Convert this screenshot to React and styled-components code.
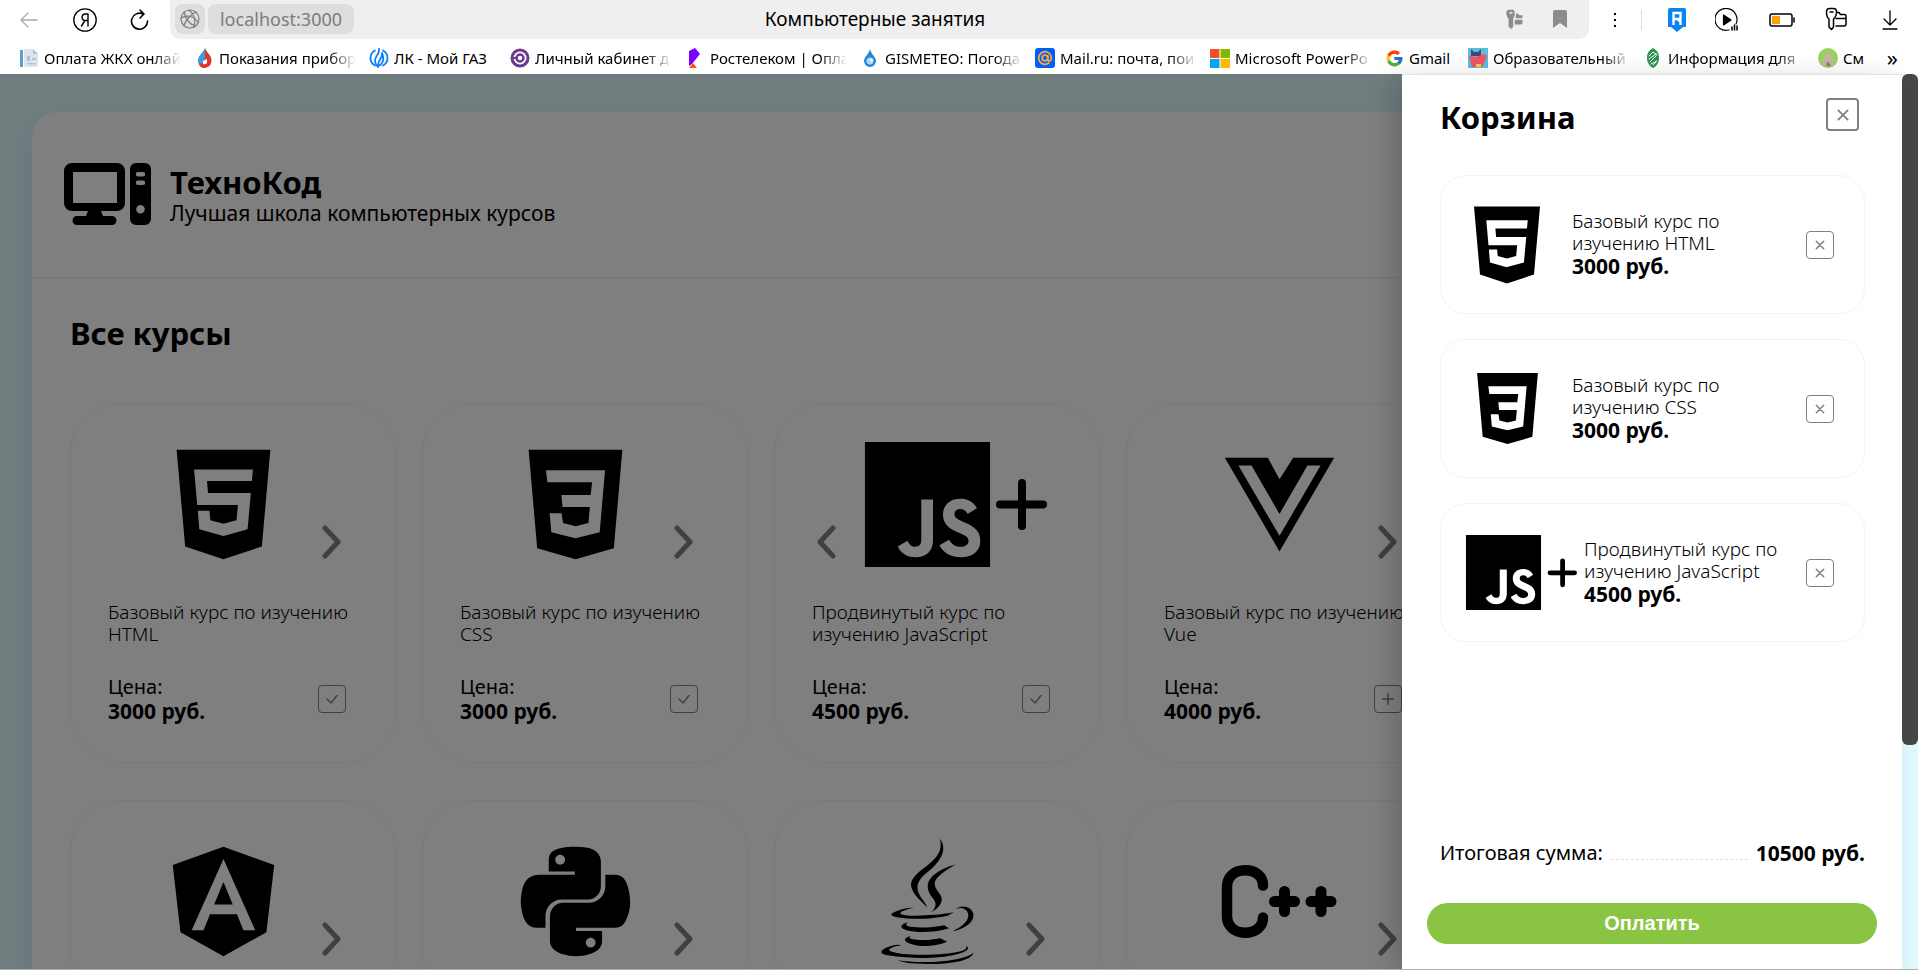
import React from "react";
import styled, { createGlobalStyle } from "styled-components";
import { FaHtml5, FaJs, FaVuejs, FaAngular, FaPython, FaJava } from "react-icons/fa";
import { FcGoogle } from "react-icons/fc";

const GlobalStyle = createGlobalStyle`
  * { box-sizing: border-box; }
  body {
    margin: 0;
    background: #dffaff;
    color: #000;
    font-family: "Noto Sans", "Open Sans", sans-serif;
  }
  h1, h2, p, ul { margin: 0; padding: 0; }
  ul { list-style: none; }
  button { font-family: inherit; cursor: pointer; }
`;

const Window = styled.div`
  display: flex;
  flex-direction: column;
  height: 100vh;
  overflow: hidden;
  border-bottom: 1px solid #b5aca8;
`;

/* ---------- browser bars ---------- */

const BrowserBars = styled.header`
  flex: none;
  background: #fff;
`;

const Toolbar = styled.div`
  display: flex;
  align-items: center;
  height: 39px;
  padding: 0 2px 0 12px;
`;

const BarButton = styled.button`
  display: flex;
  align-items: center;
  justify-content: center;
  flex: none;
  width: ${(p) => p.$width || 55}px;
  height: 36px;
  padding: 0;
  border: 0;
  background: none;
`;

const NavGroup = styled.nav`
  display: flex;
  flex: none;
  width: 158px;
`;

const AddressBar = styled.div`
  display: flex;
  align-items: center;
  flex: 1;
  height: 39px;
  padding: 0 12px 1px 5px;
  gap: 3px;
  border-radius: 0 0 10px 10px;
  background: #efefef;
`;

const Chip = styled.button`
  display: flex;
  align-items: center;
  justify-content: center;
  flex: none;
  width: ${(p) => p.$width}px;
  height: 30px;
  padding: 0;
  border: 0;
  border-radius: 8px;
  background: #dedede;
  color: #7c7c7c;
  font-size: 18px;
`;

const PageTitle = styled.span`
  flex: 1;
  padding-right: 92px;
  text-align: center;
  font-size: 19px;
  line-height: 30px;
`;

const Separator = styled.span`
  width: 1px;
  height: 20px;
  margin: 0 14px 0 0;
  background: #dcdcdc;
`;

const Bookmarks = styled.ul`
  display: flex;
  align-items: center;
  gap: 16px;
  height: 35px;
  padding: 3px 20px 0 19px;
`;

const BookmarkLink = styled.a`
  display: flex;
  align-items: center;
  gap: 5px;
  color: #000;
  font-size: 15px;
  line-height: 20px;
  text-decoration: none;

  svg { flex: none; }
`;

const BookmarkText = styled.span`
  width: ${(p) => p.$width}px;
  margin-right: ${(p) => (p.$fade ? -12 : 0)}px;
  overflow: hidden;
  white-space: nowrap;
  mask-image: ${(p) =>
    p.$fade ? "linear-gradient(to right, #000 75%, transparent 94%)" : "none"};
`;

const MoreButton = styled.button`
  margin-left: auto;
  padding: 0 0 2px;
  border: 0;
  background: none;
  font-size: 22px;
  line-height: 20px;
`;

/* ---------- shop page ---------- */

const Viewport = styled.div`
  position: relative;
  display: flex;
  flex: 1;
  min-height: 0;
`;

const Page = styled.div`
  flex: 1;
  min-width: 0;
  overflow: hidden;
  padding: 38px 32px 0;
`;

const Shop = styled.div`
  min-height: 1200px;
  border-radius: 25px;
  background: #fff;
  box-shadow: 0 10px 20px rgba(0, 0, 0, 0.06);
`;

const ShopHeader = styled.div`
  display: flex;
  align-items: center;
  gap: 19px;
  height: 166px;
  padding: 0 32px 1px;
  border-bottom: 1px solid #eaeaea;
`;

const ShopTitles = styled.div`
  padding-top: 2px;
`;

const ShopName = styled.h1`
  font-size: 31px;
  line-height: 36px;
  font-weight: 700;
`;

const Slogan = styled.p`
  font-size: 21px;
  line-height: 27px;
`;

const Courses = styled.main`
  padding: 36px 38px;
`;

const SectionTitle = styled.h2`
  font-size: 31px;
  line-height: 38px;
  font-weight: 700;
`;

const CourseGrid = styled.div`
  display: grid;
  grid-template-columns: repeat(4, 326px);
  gap: 37px 26px;
  margin-top: 51px;
`;

const Card = styled.article`
  padding: 38px 37px;
  border: 1px solid #f3f3f3;
  border-radius: 50px;
`;

const Media = styled.div`
  display: grid;
  grid-template-columns: 24px 1fr 26px;
  align-items: end;
  width: 233px;
  height: 125px;
`;

const Picture = styled.div`
  grid-column: 2;
  display: flex;
  align-items: center;
  justify-content: center;
  height: 125px;
  margin: 0 -10px;

  svg { flex: none; }
`;

const SlideButton = styled.button`
  grid-column: ${(p) => (p.$next ? 3 : 1)};
  grid-row: 1;
  display: flex;
  justify-content: ${(p) => (p.$next ? "flex-end" : "flex-start")};
  padding: 0 0 8px;
  padding-left: ${(p) => (p.$next ? 0 : 5)}px;
  border: 0;
  background: none;
  color: #808080;

  svg { flex: none; }
`;

const CourseName = styled.p`
  font-size: 19px;
  line-height: 22px;
  font-weight: 300;
`;

const CardName = styled(CourseName)`
  height: 44px;
  margin-top: 34px;
`;

const PriceRow = styled.div`
  display: flex;
  align-items: center;
  justify-content: space-between;
  margin-top: 29px;
  padding-right: 12px;
  font-size: 20px;
  line-height: 25px;
`;

const Price = styled.p`
  font-size: 21px;
  line-height: 25px;
  font-weight: 700;
`;

const SquareButton = styled.button`
  display: flex;
  align-items: center;
  justify-content: center;
  flex: none;
  width: ${(p) => p.$size || 28}px;
  height: ${(p) => p.$size || 28}px;
  padding: 0;
  border: ${(p) => (p.$size ? 2 : 1)}px solid #808080;
  border-radius: 4px;
  background: none;
  color: #808080;
`;

/* ---------- cart ---------- */

const Scrollbar = styled.div`
  flex: none;
  width: 16px;
  background: #dffaff;
`;

const Thumb = styled.div`
  height: 75%;
  border-radius: 6px;
  background: #474747;
`;

const Overlay = styled.div`
  position: absolute;
  inset: 0 16px 0 0;
  display: flex;
  justify-content: flex-end;
  background: rgba(0, 0, 0, 0.5);
`;

const Drawer = styled.aside`
  display: flex;
  flex-direction: column;
  width: 500px;
  padding: 23px 25px 25px;
  border-top: 1px solid #e2e2e2;
  background: #fff;
  box-shadow: -10px 4px 24px rgba(0, 0, 0, 0.16);
`;

const DrawerHead = styled.div`
  display: flex;
  align-items: flex-start;
  justify-content: space-between;
  height: 77px;
  padding: 0 18px 0 13px;
`;

const CartList = styled.ul`
  display: flex;
  flex-direction: column;
  flex: 1;
  gap: 25px;
  padding: 0 12px 0 13px;
`;

const CartItem = styled.li`
  display: flex;
  align-items: center;
  height: 139px;
  padding: 0 30px 0 25px;
  border: 1px solid #f3f3f3;
  border-radius: 26px;
`;

const CartPicture = styled.div`
  display: flex;
  justify-content: ${(p) => (p.$wide ? "flex-start" : "center")};
  flex: none;
  width: ${(p) => (p.$wide ? 118 : 82)}px;
  margin-right: ${(p) => (p.$wide ? 0 : 24)}px;
`;

const CartText = styled.div`
  flex: 1;
  padding-right: 20px;
`;

const TotalRow = styled.div`
  display: flex;
  align-items: center;
  gap: 8px;
  padding: 0 12px 0 13px;
  font-size: 20px;
  line-height: 28px;
`;

const Dots = styled.span`
  flex: 1;
  height: 14px;
  border-bottom: 1px dashed #dfdfdf;
`;

const PayButton = styled.button`
  height: 41px;
  margin-top: 36px;
  padding: 0;
  border: 0;
  border-radius: 21px;
  background: #89c443;
  color: #fff;
  font-family: "Liberation Sans", sans-serif;
  font-size: 20px;
  font-weight: 700;
`;

/* ---------- drawings ---------- */

const Glyph = ({ w = 20, h = 20, box, children, ...rest }) => (
  <svg
    width={w}
    height={h}
    viewBox={box || `0 0 ${w} ${h}`}
    fill="none"
    stroke="currentColor"
    strokeLinecap="round"
    strokeLinejoin="round"
    aria-hidden="true"
    {...rest}
  >
    {children}
  </svg>
);

const Css3 = ({ size }) => (
  <svg width={size} height={size} viewBox="0 0 384 512" aria-hidden="true">
    <path
      fillRule="evenodd"
      d="M0 32h384l-35 403-157 45-157-45zM71 116l6 49h183l-6 52H134l5 49h112l-6 66-53 13-51-13-6-40H86l7 78 99 24 99-24 22-254z"
    />
  </svg>
);

const JsPlus = ({ size }) => (
  <svg width={size} height={size} viewBox="0 0 125 125" overflow="visible" aria-hidden="true">
    <FaJs x="-9" y="-9" size={143} />
    <path
      d={size > 100 ? "M157 41v43M135 62.500h43" : "M161 43v40M140 63h41"}
      fill="none"
      stroke="#000"
      strokeWidth={8}
      strokeLinecap="round"
    />
  </svg>
);

const Cpp = () => (
  <svg width="125" height="125" viewBox="0 0 125 125" fill="none" stroke="#000" strokeLinecap="round" aria-hidden="true">
    <path d="M46 46.500c0-9-7-15.200-18-15.200s-18 7-18 16.700v29c0 9.700 7 16.700 18 16.700s18-6.200 18-15.200" strokeWidth="10.500" />
    <path d="M67.500 52.500v20M57.500 62.500h20M104 52.500v20M94 62.500h20" strokeWidth="11" />
  </svg>
);

const Computer = () => (
  <svg width="87" height="62" viewBox="0 0 87 62" aria-hidden="true">
    <path
      fillRule="evenodd"
      d="M8 0h45a8 8 0 0 1 8 8v32a8 8 0 0 1-8 8H37l2 5h9a4.500 4.500 0 0 1 0 9H13a4.500 4.500 0 0 1 0-9h9l2-5H8a8 8 0 0 1-8-8V8a8 8 0 0 1 8-8zM9 9v31h44V9z"
    />
    <path
      fillRule="evenodd"
      d="M72 0h9a6 6 0 0 1 6 6v50a6 6 0 0 1-6 6h-9a6 6 0 0 1-6-6V6a6 6 0 0 1 6-6zM74 9a2.200 2.200 0 0 0 0 4.400h5a2.200 2.200 0 0 0 0-4.400zM74 17.500a2.200 2.200 0 0 0 0 4.400h5a2.200 2.200 0 0 0 0-4.400zM76.500 42a4.300 4.300 0 1 0 .01 8.600a4.300 4.300 0 0 0-.01-8.600z"
    />
  </svg>
);

const Chevron = ({ next }) => (
  <Glyph w={19} h={34} strokeWidth="5">
    <path d={next ? "M3 3l13 14-13 14" : "M16 3L3 17l13 14"} />
  </Glyph>
);

const Check = () => (
  <Glyph w={12} h={12} strokeWidth="1.500"><path d="M1 6l4 4 6-7.500" /></Glyph>
);
const Plus = () => (
  <Glyph w={12} h={12} strokeWidth="1.500"><path d="M6 .75v10.500M.75 6h10.500" /></Glyph>
);
const Cross = ({ size = 8 }) => (
  <Glyph w={size} h={size} box="0 0 8 8" overflow="visible" strokeWidth="1.500">
    <path d="M.3.3l7.400 7.400M7.700.3L.3 7.700" />
  </Glyph>
);

const KeyShape = () => (
  <Glyph w={22} h={26} strokeWidth={1.5}>
    <path d="M1.500 5c0-2 1-3.500 3-3.500h4c2 0 3 1.500 3 3.500 0 3-.5 5-3 7v8l-2 2.500L4 20V12C2 10.500 1.500 8 1.500 5z" />
    <path d="M12 5.500h2l1.500 2h4q1.500 0 1.500 1.500V17q0 2-2 2h-8M11 11.500h10M5 5h3" />
  </Glyph>
);

/* ---------- data ---------- */

const favicons = {
  doc: (
    <Glyph stroke="none">
      <path d="M1 2h3v17H1z" fill="#5d9fd0" /><path d="M5 1h9l5 5v13H5z" fill="#dde5ec" />
      <path d="M14 1v5h5zM8 8h3v5H8zM13 10h4v2h-4zM8 15h9v1.500H8z" fill="#b5c3d0" />
    </Glyph>
  ),
  drop: (
    <Glyph stroke="none">
      <path d="M11 0c-2 5-8 8-7 14 1 4 4 6 7 6z" fill="#39a0dd" />
      <path d="M11 0c2 5 7 8 6.500 13S14 20 9 20c-3-1-4-3-4-5 4 2 6-2 6-6z" fill="#e23427" />
      <path d="M9 13l4-2v4q-2 2-4 1z" fill="#fff" />
    </Glyph>
  ),
  gas: (
    <Glyph stroke="#0b7cff" strokeWidth="1.800">
      <path d="M6 2.500a8.500 8.500 0 0 0 0 15M14 2.500a8.500 8.500 0 0 1 0 15" />
      <path d="M10 1C11 6 6 8 6 13c0 3 2 5 3 6M13 5c1 5-4 6-4 13 4-1 7-6 4-13z" />
    </Glyph>
  ),
  ring: (
    <Glyph stroke="#6b3c8c" strokeWidth="3">
      <circle cx="10" cy="10" r="8" /><circle cx="10" cy="10" r="3.500" strokeWidth="2.500" /><path d="M2 10h4" strokeWidth="2" />
    </Glyph>
  ),
  rostelecom: (
    <Glyph stroke="none">
      <path d="M4 3l6-3 5 6-8 10-3 2z" fill="#7700ff" /><path d="M4 20l4-5 4 5z" fill="#ff4f12" />
    </Glyph>
  ),
  gismeteo: (
    <Glyph stroke="none">
      <path d="M10 1c1 5 6 8 6 12a6 6 0 0 1-12 0C4 9 9 6 10 1z" fill="#2a83d8" />
      <circle cx="10" cy="13" r="3.500" fill="#9fdcff" /><circle cx="11.500" cy="12" r="1.500" fill="#fff" />
    </Glyph>
  ),
  mail: (
    <Glyph stroke="#ffa930" strokeWidth="1.800">
      <rect width="20" height="20" rx="3" fill="#005ff9" stroke="none" />
      <circle cx="10" cy="10" r="2.800" /><path d="M12.800 8v3.500c0 2.500 3.500 2 3.500-1.500a6.300 6.300 0 1 0-2.500 5" />
    </Glyph>
  ),
  microsoft: (
    <Glyph stroke="none">
      <path d="M0 1h9.500v9H0z" fill="#f25022" /><path d="M10.500 1H20v9h-9.500z" fill="#7fba00" />
      <path d="M0 11h9.500v9H0z" fill="#00a4ef" /><path d="M10.500 11H20v9h-9.500z" fill="#ffb900" />
    </Glyph>
  ),
  google: <FcGoogle size={19} />,
  school: (
    <Glyph stroke="none">
      <path d="M0 0h20v20H0z" fill="#5cbbe0" /><path d="M3 1l3 3h4l3-3v7H3z" fill="#45476e" />
      <path d="M1 8l7 1 8-3 3 2-5 11H4z" fill="#ef5361" /><path d="M8 16h5v3H8z" fill="#f7c93c" />
    </Glyph>
  ),
  leaf: (
    <Glyph stroke="none">
      <path d="M10 0c5 3 6 6 6 10s-2 8-6 10c-4-2-6-6-6-10S5 3 10 0z" fill="#2c9250" />
      <path d="M6 8l4-4 4 3M6 11l7-5M7 14l6-6M10 17l4-4-6 3" stroke="#fff" strokeWidth="1" />
    </Glyph>
  ),
  hands: (
    <Glyph stroke="none">
      <circle cx="10" cy="10" r="10" fill="#9bd05a" /><path d="M10 3l3 4 2 7 3 3H2l3-4 2-6z" fill="#c4b5a6" />
      <path d="M10 4v9l3 5H8l2-5" fill="#8c7a72" />
    </Glyph>
  ),
};

const bookmarks = [
  { icon: "doc", text: "Оплата ЖКХ онлай", width: 146, fade: true },
  { icon: "drop", text: "Показания прибор", width: 146, fade: true },
  { icon: "gas", text: "ЛК - Мой ГАЗ", width: 100 },
  { icon: "ring", text: "Личный кабинет д", width: 146, fade: true },
  { icon: "rostelecom", text: "Ростелеком | Опла", width: 146, fade: true },
  { icon: "gismeteo", text: "GISMETEO: Погода", width: 146, fade: true },
  { icon: "mail", text: "Mail.ru: почта, пои", width: 146, fade: true },
  { icon: "microsoft", text: "Microsoft PowerPo", width: 146, fade: true },
  { icon: "google", text: "Gmail", width: 43 },
  { icon: "school", text: "Образовательный", width: 146, fade: true },
  { icon: "leaf", text: "Информация для", width: 146, fade: true },
  { icon: "hands", text: "См", width: 24 },
];

const courses = [
  { name: "Базовый курс по изучению HTML", price: 3000, icon: <FaHtml5 size={125} />, added: true },
  { name: "Базовый курс по изучению CSS", price: 3000, icon: <Css3 size={125} />, added: true },
  { name: "Продвинутый курс по изучению JavaScript", price: 4500, icon: <JsPlus size={125} />, added: true, last: true },
  { name: "Базовый курс по изучению Vue", price: 4000, icon: <FaVuejs size={125} /> },
  { icon: <FaAngular size={125} /> },
  { icon: <FaPython size={125} /> },
  { icon: <FaJava size={125} /> },
  { icon: <Cpp /> },
];

const cart = [
  { name: "Базовый курс по изучению HTML", price: 3000, icon: <FaHtml5 size={88} /> },
  { name: "Базовый курс по изучению CSS", price: 3000, icon: <Css3 size={81} /> },
  { name: "Продвинутый курс по изучению JavaScript", price: 4500, icon: <JsPlus size={75} />, wide: true },
];

function Browser() {
  return (
    <BrowserBars>
      <Toolbar>
        <NavGroup>
          <BarButton $width={34} aria-label="Назад">
            <Glyph w={18} h={18} stroke="#a8a8a8" strokeWidth="1.300"><path d="M17 9H1M8 2L1 9l7 7" /></Glyph>
          </BarButton>
          <BarButton $width={78} aria-label="Яндекс">
            <Glyph w={24} h={24} strokeWidth="1.300">
              <circle cx="12" cy="12" r="11.200" />
              <path d="M15 18V6h-2.500c-4.500 0-4.500 6.500 0 6.500H15M12 12.500L8.500 18" strokeWidth="1.400" />
            </Glyph>
          </BarButton>
          <BarButton $width={32} aria-label="Обновить">
            <Glyph w={20} h={22} strokeWidth="1.600"><path d="M17.500 12A8 8 0 1 1 13 5M10 1l4 4-4 4" /></Glyph>
          </BarButton>
        </NavGroup>
        <AddressBar>
          <Chip $width={30} aria-label="Сведения о сайте">
            <Glyph strokeWidth="1.200">
              <circle cx="10" cy="10" r="9" /><path d="M4 3c2 8 6 13 12 14M16 3C12 5 5 11 4 17M1 9c5-3 12-3 17 4M9 1c5 4 7 10 5 17" />
            </Glyph>
          </Chip>
          <Chip $width={146}>localhost:3000</Chip>
          <PageTitle>Компьютерные занятия</PageTitle>
          <BarButton $width={52} aria-label="Пароли">
            <svg width="18" height="20" viewBox="0 0 22 26" fill="#8c8c8c" aria-hidden="true">
              <path d="M1 5c0-2 1-4 3-4h5c2 0 3 2 3 4 0 3 0 5-2 7v11l-3 3-3-3V13C2 11 1 8 1 5zM14 6h2l2 2h4v4h-9zM12 14h10v4q0 2-2 2h-8z" />
              <path d="M5 4h4v2H5z" fill="#efefef" />
            </svg>
          </BarButton>
          <BarButton $width={34} aria-label="В закладки">
            <svg width="14" height="18" viewBox="0 0 14 18" fill="#8c8c8c" aria-hidden="true"><path d="M2 0h10q2 0 2 2v16l-7-5-7 5V2q0-2 2-2z" /></svg>
          </BarButton>
        </AddressBar>
        <BarButton $width={52} aria-label="Меню">
          <svg width="4" height="16" viewBox="0 0 4 16" aria-hidden="true"><path d="M1 1h2v2H1zM1 7h2v2H1zM1 13h2v2H1z" /></svg>
        </BarButton>
        <Separator />
        <BarButton $width={42} aria-label="Расширение">
          <svg width="18" height="24" viewBox="0 0 18 24" aria-hidden="true">
            <path d="M2 0h14q2 0 2 2v17h-3l-6 5-6-5H0V2q0-2 2-2z" fill="#0a84f5" />
            <path d="M5.500 17V5h7v6h-7M9 11l3.500 2.500V17" fill="none" stroke="#fff" strokeWidth="2.400" />
          </svg>
        </BarButton>
        <BarButton $width={58} aria-label="Плеер">
          <Glyph w={24} h={24} strokeWidth="1.200">
            <path d="M14 22A11 11 0 1 1 21 16" /><path d="M8.500 7v10l7.500-5z" fill="#000" />
            <path d="M17 22v-3M19.500 22v-5M22 22v-4" strokeWidth="1.500" />
          </Glyph>
        </BarButton>
        <BarButton $width={52} aria-label="Батарея">
          <Glyph w={26} h={14} strokeWidth="1.500">
            <rect x="1" y="1" width="22" height="12" rx="2" /><path d="M3 3h8v8H3z" fill="#ffa000" stroke="none" /><path d="M25 5v4" />
          </Glyph>
        </BarButton>
        <BarButton $width={56} aria-label="Ключи"><KeyShape /></BarButton>
        <BarButton $width={52} aria-label="Загрузки">
          <Glyph w={16} h={20} strokeWidth="1.300"><path d="M8 1v14M2 9l6 6 6-6M1 19h14" /></Glyph>
        </BarButton>
      </Toolbar>
      <Bookmarks>
        {bookmarks.map((b) => (
          <li key={b.icon}>
            <BookmarkLink href="#">
              {favicons[b.icon]}
              <BookmarkText $width={b.width} $fade={b.fade}>{b.text}</BookmarkText>
            </BookmarkLink>
          </li>
        ))}
        <MoreButton aria-label="Ещё закладки">»</MoreButton>
      </Bookmarks>
    </BrowserBars>
  );
}

function CourseCard({ course }) {
  return (
    <Card>
      <Media>
        {course.last && <SlideButton aria-label="Предыдущий"><Chevron /></SlideButton>}
        <Picture>{course.icon}</Picture>
        {!course.last && <SlideButton $next aria-label="Следующий"><Chevron next /></SlideButton>}
      </Media>
      {course.name && (
        <>
          <CardName>{course.name}</CardName>
          <PriceRow>
            <div>
              Цена:
              <Price>{course.price} руб.</Price>
            </div>
            <SquareButton aria-label="В корзину">{course.added ? <Check /> : <Plus />}</SquareButton>
          </PriceRow>
        </>
      )}
    </Card>
  );
}

function Cart() {
  const total = cart.reduce((sum, item) => sum + item.price, 0);
  return (
    <Drawer>
      <DrawerHead>
        <SectionTitle>Корзина</SectionTitle>
        <SquareButton $size={33} aria-label="Закрыть"><Cross size={10} /></SquareButton>
      </DrawerHead>
      <CartList>
        {cart.map((item) => (
          <CartItem key={item.name}>
            <CartPicture $wide={item.wide}>{item.icon}</CartPicture>
            <CartText>
              <CourseName>{item.name}</CourseName>
              <Price>{item.price} руб.</Price>
            </CartText>
            <SquareButton aria-label="Удалить"><Cross /></SquareButton>
          </CartItem>
        ))}
      </CartList>
      <TotalRow>
        <span>Итоговая сумма:</span>
        <Dots />
        <Price>{total} руб.</Price>
      </TotalRow>
      <PayButton>Оплатить</PayButton>
    </Drawer>
  );
}

export default function App() {
  return (
    <>
      <GlobalStyle />
      <Window>
        <Browser />
        <Viewport>
          <Page>
            <Shop>
              <ShopHeader>
                <Computer />
                <ShopTitles>
                  <ShopName>ТехноКод</ShopName>
                  <Slogan>Лучшая школа компьютерных курсов</Slogan>
                </ShopTitles>
              </ShopHeader>
              <Courses>
                <SectionTitle>Все курсы</SectionTitle>
                <CourseGrid>
                  {courses.map((course, i) => <CourseCard key={i} course={course} />)}
                </CourseGrid>
              </Courses>
            </Shop>
          </Page>
          <Scrollbar><Thumb /></Scrollbar>
          <Overlay><Cart /></Overlay>
        </Viewport>
      </Window>
    </>
  );
}
